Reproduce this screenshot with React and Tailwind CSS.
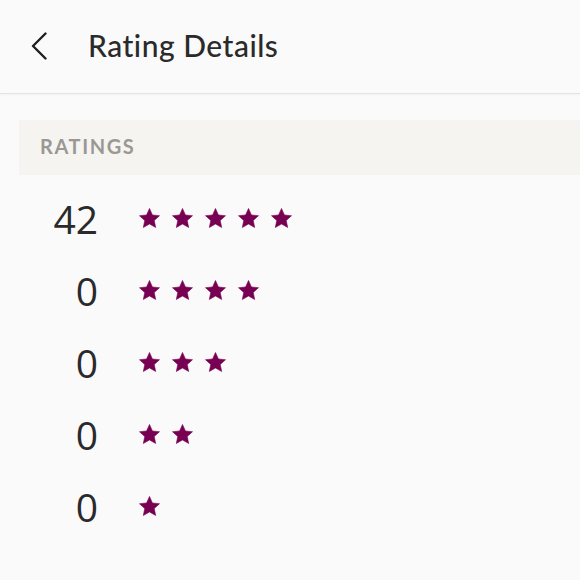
const counts = [
  { stars: 5, count: 42 },
  { stars: 4, count: 0 },
  { stars: 3, count: 0 },
  { stars: 2, count: 0 },
  { stars: 1, count: 0 },
];

const Star = () => (
  <svg width="23" height="23" viewBox="0 0 24 24" className="shrink-0">
    <path
      d="M12 1.5L15.06 8.29 22.46 9.1 16.95 14.11 18.47 21.4 12 17.7 5.53 21.4 7.05 14.11 1.54 9.1 8.94 8.29z"
      fill="#780052"
      stroke="#780052"
      strokeWidth="0.6"
      strokeLinejoin="round"
    />
  </svg>
);

const App = () => {
  return (
    <div className="w-[580px] h-[580px] bg-[#fafafa] overflow-hidden font-['Lato',sans-serif] text-[#2a2a2a]">
      <header className="h-[94px] flex items-center border-b border-[#e3e3e3] shadow-[0_1px_2px_rgba(0,0,0,0.04)]">
        <svg width="16" height="28" viewBox="0 0 16 28" className="ml-[31px] -mt-[2px]">
          <polyline points="14.5,1.5 2,14 14.5,26.5" fill="none" stroke="#1f1f1f" strokeWidth="2.4" strokeLinecap="round" strokeLinejoin="round" />
        </svg>
        <h1 className="ml-[41px] -mt-[3px] text-[30px] font-medium tracking-[0.5px]">Rating Details</h1>
      </header>

      <section className="pt-[26px] pl-[19px]">
        <div className="h-[55px] bg-[#f5f4f1] flex items-center pl-[21px]">
          <span className="-mt-[3px] text-[20px] font-bold tracking-[1.6px] text-[#9b9894]">RATINGS</span>
        </div>

        <div className="pt-[7px]">
          {counts.map((r) => (
            <div key={r.stars} className="h-[72px] flex items-center">
              <span className="w-[79px] text-right text-[39px] font-['Open_Sans',sans-serif] leading-none text-[#2a2a2a]">
                {r.count}
              </span>
              <div className="ml-[40px] flex gap-[10px]">
                {Array.from({ length: r.stars }).map((_, i) => (
                  <Star key={i} />
                ))}
              </div>
            </div>
          ))}
        </div>
      </section>
    </div>
  );
};

export default App;
